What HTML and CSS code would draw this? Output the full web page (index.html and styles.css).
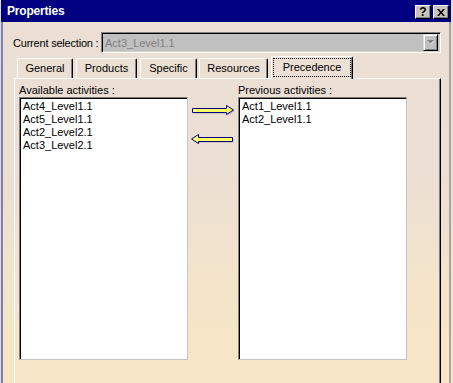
FILE: index.html
```html
<!DOCTYPE html>
<html>
<head>
<meta charset="utf-8">
<link rel="stylesheet" href="styles.css">
</head>
<body>
<div class="window">
  <div class="titlebar">
    <span class="title">Properties</span>
    <div class="caption-buttons">
      <span class="cap-btn help">?</span>
      <span class="cap-btn close">
        <svg width="8" height="7" viewBox="0 0 8 7"><path d="M0 0h2l2 2.5L6 0h2L5 3.5 8 7H6L4 4.5 2 7H0l3-3.5z" fill="#000"/></svg>
      </span>
    </div>
  </div>
  <div class="client">
    <div class="selection-row">
      <span class="selection-label">Current selection :</span>
      <div class="combo">
        <span class="combo-text">Act3_Level1.1</span>
        <span class="combo-btn">
          <svg width="7" height="5" viewBox="0 0 7 5"><path d="M1 1h6L4 4z" fill="#fff"/><path d="M0 0h7L3.5 3.5z" fill="#808080"/></svg>
        </span>
      </div>
    </div>
    <div class="tabs">
      <div class="tab tab-general">General</div>
      <div class="tab tab-products">Products</div>
      <div class="tab tab-specific">Specific</div>
      <div class="tab tab-resources">Resources</div>
      <div class="tab tab-precedence active"><span class="focus">Precedence</span></div>
    </div>
    <div class="panel">
      <div class="columns">
        <div class="group">
          <div class="group-label">Available activities :</div>
          <div class="listbox">
            <div class="item">Act4_Level1.1</div>
            <div class="item">Act5_Level1.1</div>
            <div class="item">Act2_Level2.1</div>
            <div class="item">Act3_Level2.1</div>
          </div>
        </div>
        <div class="arrows">
          <svg class="arrow arrow-right" width="43" height="11" viewBox="0 0 43 11">
            <path d="M1.5 4.5H35.5V1.5L42.5 6L35.5 10.5V8.5H1.5Z" fill="#7070a0" opacity="0.45"/>
            <path d="M0.5 3.5H34.5V0.5L41.5 5L34.5 9.5V7.5H0.5Z" fill="#ffff66" stroke="#000080"/>
          </svg>
          <svg class="arrow arrow-left" width="43" height="11" viewBox="0 0 43 11">
            <path d="M42.5 4.5H8.5V1.5L1.5 6L8.5 10.5V8.5H42.5Z" fill="#7070a0" opacity="0.45"/>
            <path d="M41.5 3.5H7.5V0.5L0.5 5L7.5 9.5V7.5H41.5Z" fill="#ffff66" stroke="#000080"/>
          </svg>
        </div>
        <div class="group">
          <div class="group-label">Previous activities :</div>
          <div class="listbox">
            <div class="item">Act1_Level1.1</div>
            <div class="item">Act2_Level1.1</div>
          </div>
        </div>
      </div>
    </div>
  </div>
</div>
</body>
</html>
```
FILE: styles.css
```css
html, body {
  margin: 0;
  padding: 0;
}
body {
  width: 453px;
  height: 383px;
  overflow: hidden;
  background: linear-gradient(to bottom, #ebdfd5 0px, #ecdfd3 170px, #f6e6c7 330px, #f6e6c7 383px);
  font-family: "Liberation Sans", Arial, sans-serif;
  font-size: 11px;
  color: #000;
}
.window {
  width: 451px;
  height: 383px;
  box-sizing: border-box;
  border-left: 1px solid #dcdce6;
  display: flex;
  flex-direction: column;
}
.titlebar {
  height: 22px;
  flex: none;
  background: #000080;
  display: flex;
  align-items: center;
  justify-content: space-between;
  padding: 0 2px 0 6px;
}
.title {
  color: #fff;
  font-weight: bold;
  font-size: 12px;
  letter-spacing: -0.2px;
}
.caption-buttons {
  display: flex;
  gap: 2px;
  margin-top: 2px;
}
.cap-btn {
  width: 16px;
  height: 14px;
  box-sizing: border-box;
  background: #c8c4bc;
  border-top: 1px solid #fff;
  border-left: 1px solid #fff;
  border-right: 1px solid #000;
  border-bottom: 1px solid #000;
  box-shadow: inset -1px -1px 0 #808080;
  display: flex;
  align-items: center;
  justify-content: center;
  font-weight: bold;
  font-size: 12px;
  line-height: 12px;
}
.client {
  flex: 1;
  display: flex;
  flex-direction: column;
  border-left: 2px solid #8080aa;
  border-right: 2px solid #a4a4a4;
  min-height: 0;
}
.selection-row {
  display: flex;
  align-items: center;
  margin-top: 10px;
  padding-left: 10px;
}
.selection-label {
  width: 88px;
  flex: none;
  white-space: nowrap;
  letter-spacing: -0.2px;
}
.combo {
  width: 340px;
  height: 21px;
  box-sizing: border-box;
  background: #c0c0c0;
  border-top: 1px solid #808080;
  border-left: 1px solid #808080;
  border-right: 1px solid #fff;
  border-bottom: 1px solid #fff;
  box-shadow: inset 1px 1px 0 #000, inset -1px -1px 0 #d4d0c8;
  display: flex;
  align-items: center;
  padding: 1px 2px 1px 3px;
}
.combo-text {
  flex: 1;
  color: #808080;
}
.combo-btn {
  width: 15px;
  height: 17px;
  box-sizing: border-box;
  background: #c0c0c0;
  border-top: 1px solid #dcdcdc;
  border-left: 1px solid #dcdcdc;
  border-right: 1px solid #000;
  border-bottom: 1px solid #000;
  box-shadow: inset 1px 1px 0 #fff, inset -1px -1px 0 #808080;
  display: flex;
  align-items: center;
  justify-content: center;
}
.tabs {
  display: flex;
  align-items: flex-end;
  height: 22px;
  margin-top: 3px;
  position: relative;
  z-index: 1;
}
.tab {
  height: 20px;
  box-sizing: border-box;
  border-top: 1px solid #fff;
  border-left: 1px solid #fff;
  border-right: 1px solid #000;
  border-top-left-radius: 2px;
  border-top-right-radius: 2px;
  box-shadow: inset -1px 0 0 #808080;
  display: flex;
  align-items: center;
  justify-content: center;
  padding-bottom: 1px;
}
.tab-general { margin-left: 14px; width: 56px; }
.tab-products { margin-left: 3px; width: 61px; }
.tab-specific { margin-left: 3px; width: 57px; }
.tab-resources { margin-left: 2px; width: 69px; }
.tab-precedence { margin-left: 3px; width: 82px; }
.tab.active {
  height: 23px;
  margin-bottom: -1px;
  background: #ecdfd4;
  padding-bottom: 2px;
}
.focus {
  display: flex;
  align-items: center;
  justify-content: center;
  width: 78px;
  height: 19px;
  box-sizing: border-box;
  border: 1px dotted #000;
}
.panel {
  flex: 1;
  margin-left: 11px;
  width: 427px;
  box-sizing: border-box;
  border-top: 1px solid #fff;
  border-left: 1px solid #fff;
  border-right: 1px solid #000;
  box-shadow: inset -1px 0 0 #808080;
  padding: 5px 0 0 4px;
}
.columns {
  display: grid;
  grid-template-columns: 169px 50px 169px;
}
.group-label {
  line-height: 13px;
}
.listbox {
  height: 263px;
  box-sizing: border-box;
  background: #fff;
  border-top: 1px solid #808080;
  border-left: 1px solid #808080;
  border-right: 1px solid #c4c4c4;
  border-bottom: 1px solid #c4c4c4;
  box-shadow: inset 1px 1px 0 #000;
  padding: 2px 0 0 3px;
}
.item {
  line-height: 13px;
  white-space: nowrap;
}
.arrows {
  display: flex;
  flex-direction: column;
  padding-top: 21px;
}
.arrow {
  display: block;
}
.arrow-right {
  margin-left: 4px;
}
.arrow-left {
  margin-left: 3px;
  margin-top: 18px;
}
```
